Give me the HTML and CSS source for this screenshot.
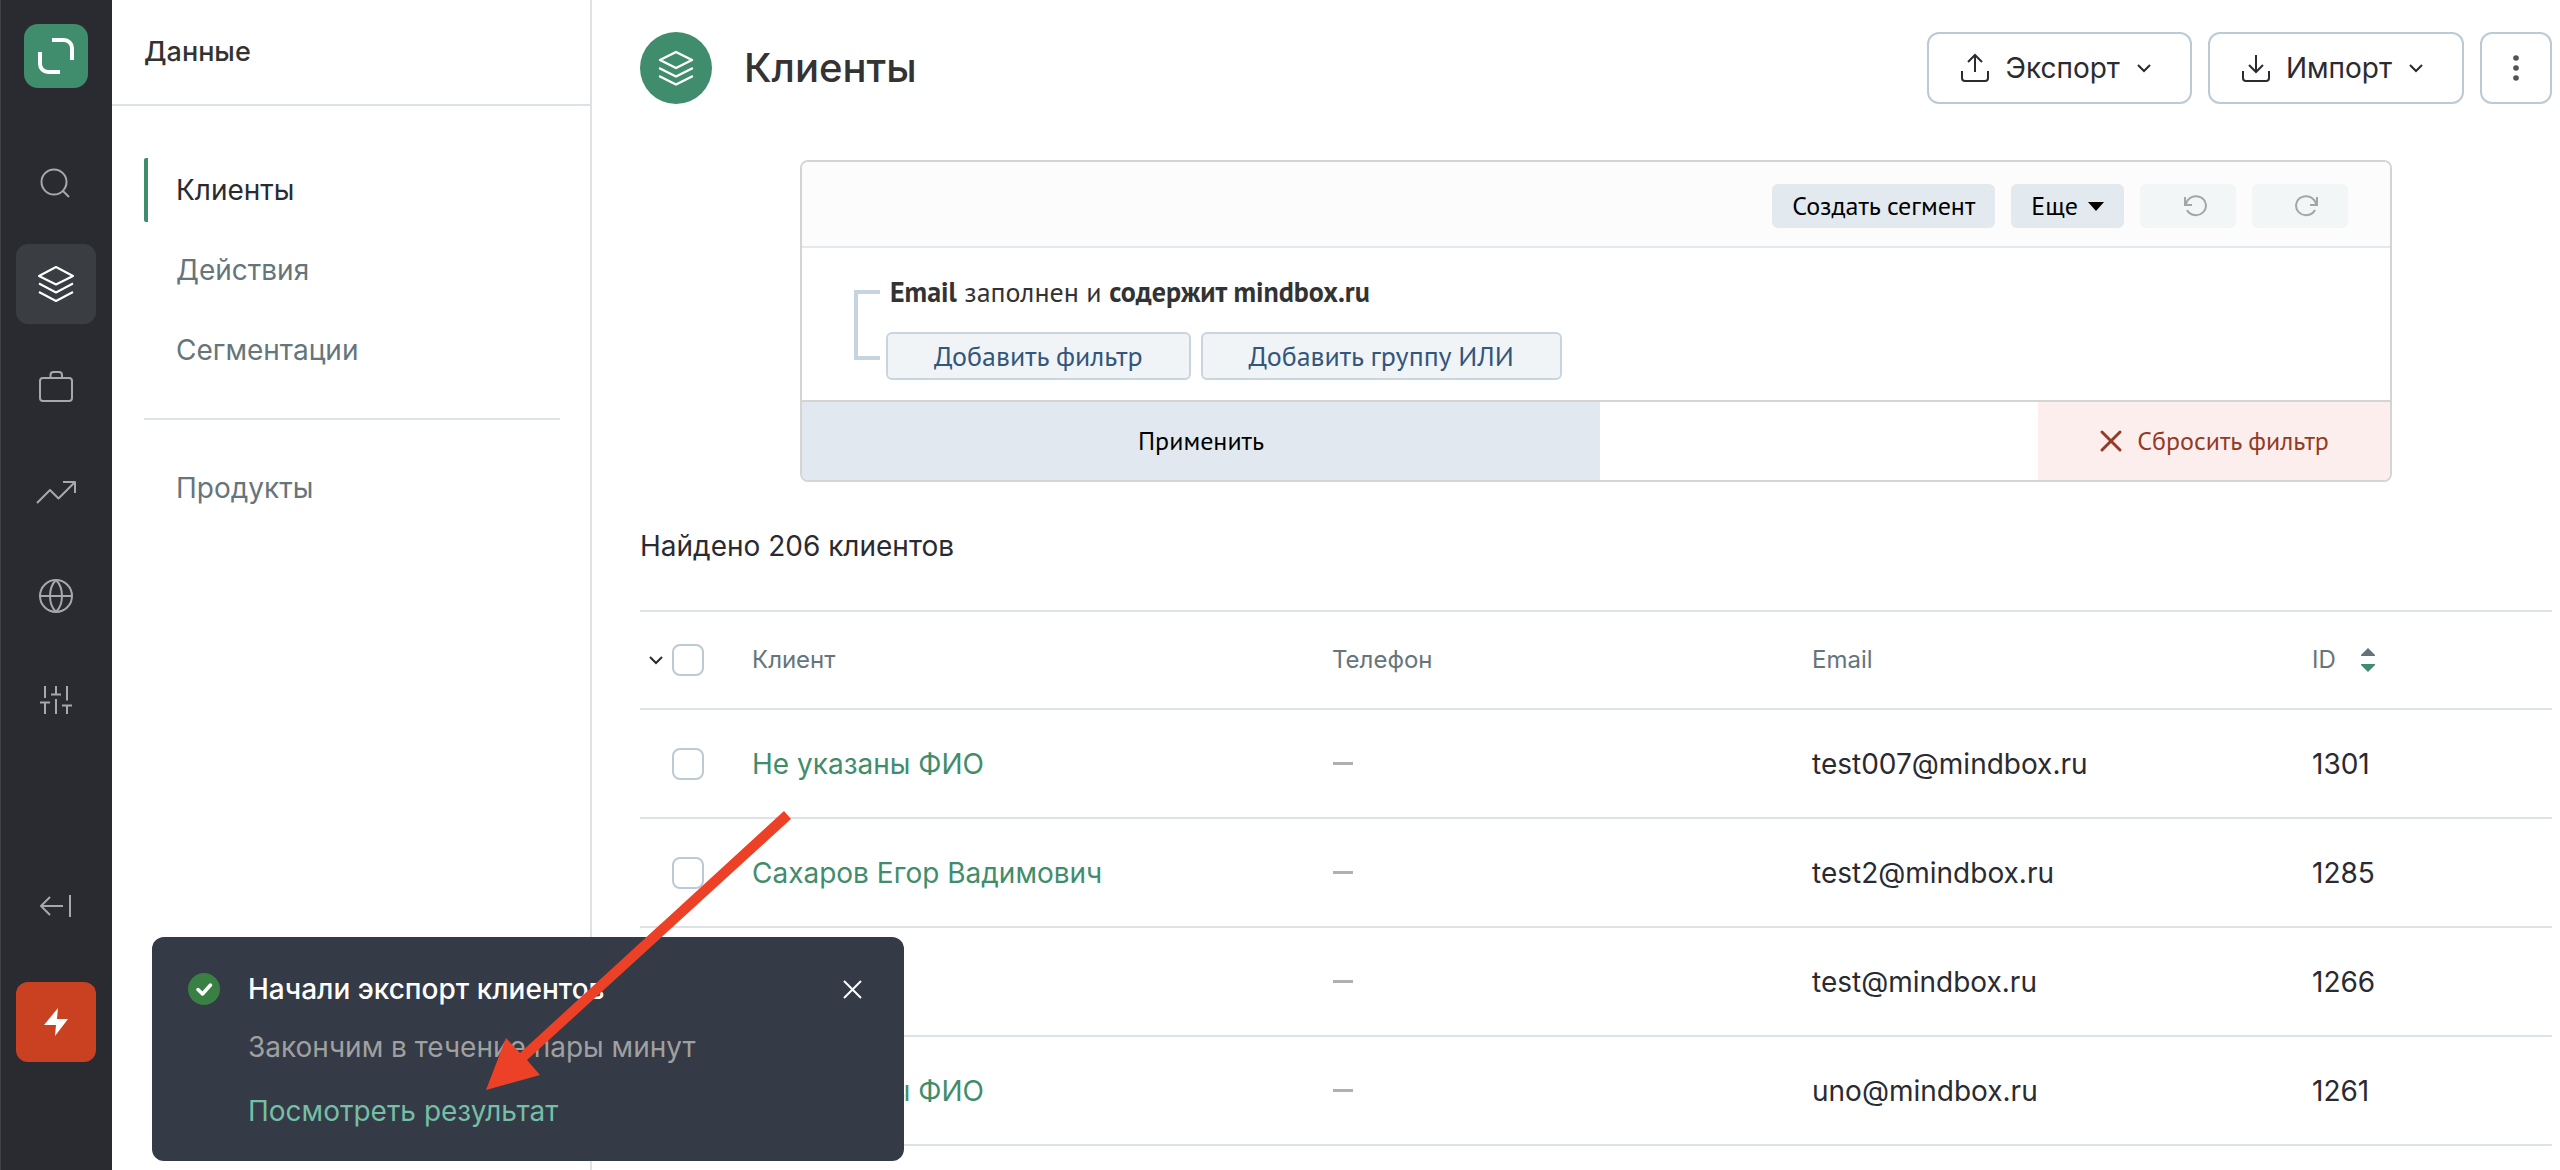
FILE: index.html
```html
<!DOCTYPE html>
<html lang="ru">
<head>
<meta charset="utf-8">
<meta name="viewport" content="width=device-width, initial-scale=1">
<title>Клиенты</title>
<link rel="stylesheet" href="styles.css">
</head>
<body>
<div class="app">
  <nav class="rail" aria-label="Разделы">
    <a class="logo" href="#" aria-label="Mindbox">
      <svg width="64" height="64" viewBox="0 0 64 64" fill="none" stroke="#fff" stroke-width="4"><path d="M28 16h12a8 8 0 0 1 8 8v12M16 28v12a8 8 0 0 0 8 8h12"/></svg>
    </a>
    <div class="rail-items">
      <button class="rail-item" type="button" aria-label="Поиск">
        <svg class="rail-icon" viewBox="0 0 48 48"><circle cx="22" cy="26" r="12.5"/><path d="M31 35l6 6"/></svg>
      </button>
      <a class="rail-item rail-item-active" href="#" aria-label="Данные">
        <svg class="rail-icon" viewBox="0 0 48 48"><path d="M24 7l17 9-17 8.500-17-8.500zM7 23.500l17 9 17-9M7 32l17 9 17-9"/></svg>
      </a>
      <a class="rail-item" href="#" aria-label="Кампании">
        <svg class="rail-icon" viewBox="0 0 48 48"><rect x="8" y="14" width="32" height="23" rx="3"/><path d="M18.500 14v-3a3 3 0 0 1 3-3h5.500a3 3 0 0 1 3 3v3"/></svg>
      </a>
      <a class="rail-item" href="#" aria-label="Отчеты">
        <svg class="rail-icon" viewBox="0 0 48 48"><path d="M5 35l13-13 8.500 8.500L43 14M31 14h12v11"/></svg>
      </a>
      <a class="rail-item" href="#" aria-label="Интеграции">
        <svg class="rail-icon" viewBox="0 0 48 48"><circle cx="24" cy="24" r="16"/><path d="M8 24h32M24 8c-8 8-8 24 0 32M24 8c8 8 8 24 0 32"/></svg>
      </a>
      <a class="rail-item" href="#" aria-label="Настройки">
        <svg class="rail-icon" viewBox="0 0 48 48"><path d="M13 10v12M8 26.500h10M13 26.500V38M24 10v8.500M19 18.500h10M24 23v15M35 10v14.500M30 29.500h10M35 29.500V38"/></svg>
      </a>
    </div>
    <div class="rail-bottom">
      <button class="rail-item" type="button" aria-label="Свернуть меню">
        <svg class="rail-icon" viewBox="0 0 48 48"><path d="M31 24H10M18 15l-9 9 9 9M38 13v22"/></svg>
      </button>
      <button class="rail-item rail-item-alert" type="button" aria-label="Быстрые действия">
        <svg width="48" height="48" viewBox="0 0 48 48" fill="#fff"><path d="M26 10l-1 11h11L23 38l1-11H12z"/></svg>
      </button>
    </div>
  </nav>

  <aside class="sidebar">
    <h2 class="sidebar-title">Данные</h2>
    <nav class="menu" aria-label="Данные">
      <div class="menu-group">
        <a class="menu-link menu-link-active" href="#">Клиенты</a>
        <a class="menu-link" href="#">Действия</a>
        <a class="menu-link" href="#">Сегментации</a>
      </div>
      <div class="menu-group">
        <a class="menu-link" href="#">Продукты</a>
      </div>
    </nav>
  </aside>

  <main class="content">
    <header class="page-head">
      <span class="page-badge">
        <svg width="48" height="48" viewBox="0 0 48 48" fill="none" stroke="#fff" stroke-width="2.500" stroke-linejoin="round" stroke-linecap="round"><path d="M24 8l16 8-16 8-16-8zM8 24.500l16 8 16-8M8 32.500l16 8 16-8"/></svg>
      </span>
      <h1 class="page-title">Клиенты</h1>
      <div class="page-actions">
        <button class="action" type="button">
          <svg width="32" height="32" viewBox="0 0 32 32" class="action-icon"><path d="M16 20V3M9 10l7-7 7 7M3 19v7a3 3 0 0 0 3 3h20a3 3 0 0 0 3-3v-7"/></svg>
          Экспорт
          <svg width="20" height="20" viewBox="0 0 20 20" class="action-icon"><path d="M4 7l6 6 6-6"/></svg>
        </button>
        <button class="action" type="button">
          <svg width="32" height="32" viewBox="0 0 32 32" class="action-icon"><path d="M16 3v17M9 13l7 7 7-7M3 19v7a3 3 0 0 0 3 3h20a3 3 0 0 0 3-3v-7"/></svg>
          Импорт
          <svg width="20" height="20" viewBox="0 0 20 20" class="action-icon"><path d="M4 7l6 6 6-6"/></svg>
        </button>
        <button class="action action-more" type="button" aria-label="Еще">
          <svg width="32" height="32" viewBox="0 0 32 32" fill="#505357"><circle cx="16" cy="6" r="2.800"/><circle cx="16" cy="16" r="2.800"/><circle cx="16" cy="26" r="2.800"/></svg>
        </button>
      </div>
    </header>

    <section class="filter" aria-label="Фильтр">
      <div class="filter-bar">
        <button class="chip" type="button">Создать сегмент</button>
        <button class="chip" type="button">Еще
          <svg width="16" height="10" viewBox="0 0 16 10"><path d="M0 1h16L8 10z"/></svg>
        </button>
        <button class="chip chip-icon" type="button" disabled aria-label="Отменить">
          <svg width="24" height="24" viewBox="0 0 24 24" class="history-icon"><path d="M2 3v8h7M3 10.500A10 9.500 0 1 1 4 16"/></svg>
        </button>
        <button class="chip chip-icon" type="button" disabled aria-label="Вернуть">
          <svg width="24" height="24" viewBox="0 0 24 24" class="history-icon"><path d="M22 3v8h-7M21 10.500A10 9.500 0 1 0 20 16"/></svg>
        </button>
      </div>
      <div class="filter-body">
        <span class="bracket"></span>
        <div class="filter-rules">
          <p class="rule"><b>Email</b> заполнен и <b>содержит mindbox.ru</b></p>
          <div class="rule-actions">
            <button class="add" type="button">Добавить фильтр</button>
            <button class="add" type="button">Добавить группу ИЛИ</button>
          </div>
        </div>
      </div>
      <div class="filter-foot">
        <button class="apply" type="button">Применить</button>
        <button class="reset" type="button">
          <svg width="24" height="24" viewBox="0 0 24 24" fill="none" stroke="currentColor" stroke-width="3" stroke-linecap="round"><path d="M3 3l18 18M21 3L3 21"/></svg>
          Сбросить фильтр
        </button>
      </div>
    </section>

    <p class="found">Найдено 206 клиентов</p>

    <table class="clients">
      <colgroup><col class="col-check"><col class="col-name"><col class="col-phone"><col class="col-email"><col class="col-id"></colgroup>
      <thead>
        <tr>
          <th>
            <div class="pick">
              <button class="pick-toggle" type="button" aria-label="Варианты выбора">
                <svg width="16" height="16" viewBox="0 0 16 16" fill="none" stroke="#2a2b30" stroke-width="2"><path d="M2 5l6 6 6-6"/></svg>
              </button>
              <input class="check" type="checkbox" aria-label="Выбрать всех">
            </div>
          </th>
          <th>Клиент</th>
          <th>Телефон</th>
          <th>Email</th>
          <th>
            <button class="sort" type="button">ID
              <svg width="16" height="24" viewBox="0 0 16 24"><path fill="#64737a" d="M8 0l7 7v1H1V7z"/><path fill="#3f8d6c" d="M8 24l7-7v-1H1v1z"/></svg>
            </button>
          </th>
        </tr>
      </thead>
      <tbody>
        <tr><td><div class="pick"><input class="check" type="checkbox" aria-label="Клиент 1301"></div></td><td><a class="client" href="#">Не указаны ФИО</a></td><td><span class="dash" aria-label="нет"></span></td><td>test007@mindbox.ru</td><td>1301</td></tr>
        <tr><td><div class="pick"><input class="check" type="checkbox" aria-label="Клиент 1285"></div></td><td><a class="client" href="#">Сахаров Егор Вадимович</a></td><td><span class="dash" aria-label="нет"></span></td><td>test2@mindbox.ru</td><td>1285</td></tr>
        <tr><td><div class="pick"><input class="check" type="checkbox" aria-label="Клиент 1266"></div></td><td><a class="client" href="#">Тест</a></td><td><span class="dash" aria-label="нет"></span></td><td>test@mindbox.ru</td><td>1266</td></tr>
        <tr><td><div class="pick"><input class="check" type="checkbox" aria-label="Клиент 1261"></div></td><td><a class="client" href="#">Не указаны ФИО</a></td><td><span class="dash" aria-label="нет"></span></td><td>uno@mindbox.ru</td><td>1261</td></tr>
      </tbody>
    </table>
  </main>
</div>

<div class="toast" role="status">
  <svg class="toast-mark" width="32" height="32" viewBox="0 0 32 32"><circle cx="16" cy="16" r="16" fill="#3a7f43"/><path d="M10 16.500l4.500 4.500 8-9" fill="none" stroke="#fff" stroke-width="3.500" stroke-linecap="round" stroke-linejoin="round"/></svg>
  <div class="toast-text">
    <strong class="toast-title">Начали экспорт клиентов</strong>
    <p class="toast-note">Закончим в течение пары минут</p>
    <a class="toast-link" href="#">Посмотреть результат</a>
  </div>
  <button class="toast-close" type="button" aria-label="Закрыть">
    <svg width="32" height="32" viewBox="0 0 32 32" fill="none" stroke="#fff" stroke-width="2"><path d="M8 8l17 17M25 8L8 25"/></svg>
  </button>
  <svg class="pointer" width="306" height="280" viewBox="0 0 306 280" fill="#ec4127" aria-hidden="true"><path d="M0 279L20 227 34 242 298 0 305 8 41 249 54 264z"/></svg>
</div>
</body>
</html>
```

FILE: styles.css
```css
* { box-sizing: border-box; }

body {
  margin: 0;
  background: #fff;
  color: #2a2b30;
  font: 400 28px/40px Inter, "Liberation Sans", sans-serif;
}

h1, h2, p { margin: 0; font-weight: inherit; }
a { color: inherit; text-decoration: none; }
svg { display: block; flex: none; }

button {
  margin: 0;
  padding: 0;
  border: 0;
  background: none;
  color: inherit;
  font: inherit;
  cursor: pointer;
}

.app { display: flex; min-height: 100vh; }

/* Icon rail */
.rail {
  flex: none;
  display: flex;
  flex-direction: column;
  align-items: center;
  width: 112px;
  padding: 24px 0 108px;
  background: #2a2b30;
  box-shadow: inset 1px 0 #404146;
}
.logo { border-radius: 14px; background: #3f8d6c; }
.rail-items { display: grid; gap: 24px; margin-top: 52px; }
.rail-bottom { display: grid; gap: 36px; margin-top: auto; }
.rail-item {
  display: flex;
  align-items: center;
  justify-content: center;
  width: 80px;
  height: 80px;
  border-radius: 12px;
  color: #a8a8aa;
}
.rail-item-active { background: #3a3d42; color: #fff; }
.rail-item-alert { background: #ca4122; }
.rail-icon {
  width: 48px;
  height: 48px;
  fill: none;
  stroke: currentColor;
  stroke-width: 2;
  stroke-linejoin: round;
}

/* Section menu */
.sidebar { flex: none; width: 480px; border-right: 2px solid #dce2e6; }
.sidebar-title {
  padding: 32px;
  border-bottom: 2px solid #dce2e6;
  color: #333;
  font-size: 27px;
  font-weight: 500;
}
.menu { padding: 52px 30px 0 32px; }
.menu-group { display: grid; gap: 16px; }
.menu-group + .menu-group {
  margin-top: 36px;
  padding-top: 36px;
  border-top: 2px solid #dce2e6;
}
.menu-link { padding: 12px 32px; color: #66757b; }
.menu-link-active {
  padding-left: 28px;
  border-left: 4px solid #3f8d6c;
  border-radius: 2px;
  color: #2a2b30;
}

/* Page */
.content { flex: 1; min-width: 0; padding: 32px 8px 0 48px; }
.page-head { display: flex; align-items: center; gap: 32px; }
.page-badge {
  display: flex;
  align-items: center;
  justify-content: center;
  width: 72px;
  height: 72px;
  border-radius: 50%;
  background: #3f8d6c;
}
.page-title { color: #333; font-size: 40px; font-weight: 500; line-height: 48px; }
.page-actions { display: flex; gap: 16px; margin-left: auto; }
.action {
  display: flex;
  align-items: center;
  gap: 14px;
  height: 72px;
  padding: 0 36px 0 30px;
  border: 2px solid #bccad3;
  border-radius: 12px;
}
.action-icon { fill: none; stroke: currentColor; stroke-width: 2; }
.action-more { justify-content: center; width: 72px; padding: 0; }

/* Filter */
.filter {
  margin: 56px 160px 0;
  border: 2px solid #d4d4d4;
  border-radius: 8px;
  overflow: hidden;
  font: 400 26px/32px "PT Sans", Roboto, sans-serif;
}
.filter-bar {
  display: flex;
  justify-content: flex-end;
  gap: 16px;
  padding: 22px 42px 18px;
  border-bottom: 2px solid #e2e8ed;
  background: #fcfcfc;
}
.chip {
  display: flex;
  align-items: center;
  justify-content: center;
  gap: 10px;
  height: 44px;
  padding: 0 20px;
  border-radius: 6px;
  background: #e2e9ef;
  color: #000;
}
.chip-icon { width: 96px; padding-left: 34px; background: #f2f6f7; }
.history-icon { fill: none; stroke: #a5a5a5; stroke-width: 2; }
.filter-body {
  display: flex;
  gap: 6px;
  padding: 28px 52px 20px;
  font-size: 28px;
}
.bracket {
  width: 26px;
  height: 70px;
  margin-top: 14px;
  border: 4px solid #c6d3e0;
  border-right: 0;
}
.filter-rules { display: grid; gap: 24px; }
.rule { padding-left: 4px; color: #333; }
.rule-actions { display: flex; gap: 10px; }
.add {
  height: 48px;
  padding: 0 46px;
  border: 2px solid #c8d5df;
  border-radius: 6px;
  background: #f1f4f7;
  color: #33567d;
}
.filter-foot {
  display: flex;
  justify-content: space-between;
  border-top: 2px solid #d4d4d4;
}
.apply, .reset { height: 78px; }
.apply { width: 798px; background: #e2e8ef; color: #000; }
.reset {
  display: flex;
  align-items: center;
  justify-content: center;
  gap: 14px;
  width: 352px;
  background: #fceeec;
  color: #943a25;
}

.found { margin-top: 44px; }

/* Clients */
.clients {
  width: 100%;
  margin-top: 44px;
  border-top: 2px solid #dce2e6;
  border-collapse: separate;
  border-spacing: 0;
  table-layout: fixed;
}
.col-check { width: 112px; }
.col-name { width: 580px; }
.col-phone { width: 480px; }
.col-email { width: 500px; }
.clients th, .clients td {
  height: 109px;
  padding: 0;
  border-bottom: 2px solid #dce2e6;
  text-align: left;
  vertical-align: middle;
}
.clients th {
  height: 98px;
  color: #66757b;
  font-size: 24px;
  font-weight: 400;
}
.pick {
  display: flex;
  align-items: center;
  justify-content: flex-end;
  gap: 8px;
  padding-right: 48px;
}
.pick-toggle { width: 16px; height: 16px; }
.check {
  appearance: none;
  width: 32px;
  height: 32px;
  margin: 0;
  border: 2px solid #bccad3;
  border-radius: 8px;
  background: #fff;
}
.client { color: #3f8d6c; }
.dash { display: block; width: 20px; height: 3px; margin-left: 1px; background: #b0b0b0; }
.sort { display: flex; align-items: center; gap: 24px; }

/* Notification */
.toast {
  position: fixed;
  bottom: 9px;
  left: 152px;
  display: flex;
  width: 752px;
  padding: 32px 36px 30px;
  border-radius: 12px;
  background: #343a46;
}
.toast-mark { margin-top: 4px; }
.toast-text { flex: 1; display: grid; padding-left: 28px; }
.toast-title { color: #fff; font-weight: 500; }
.toast-note { margin-top: 18px; color: #a0a0a0; }
.toast-link { margin-top: 24px; justify-self: start; color: #74bfa5; }
.toast-close { align-self: flex-start; margin-top: 4px; }
.pointer { position: absolute; top: -126px; left: 334px; }
```
